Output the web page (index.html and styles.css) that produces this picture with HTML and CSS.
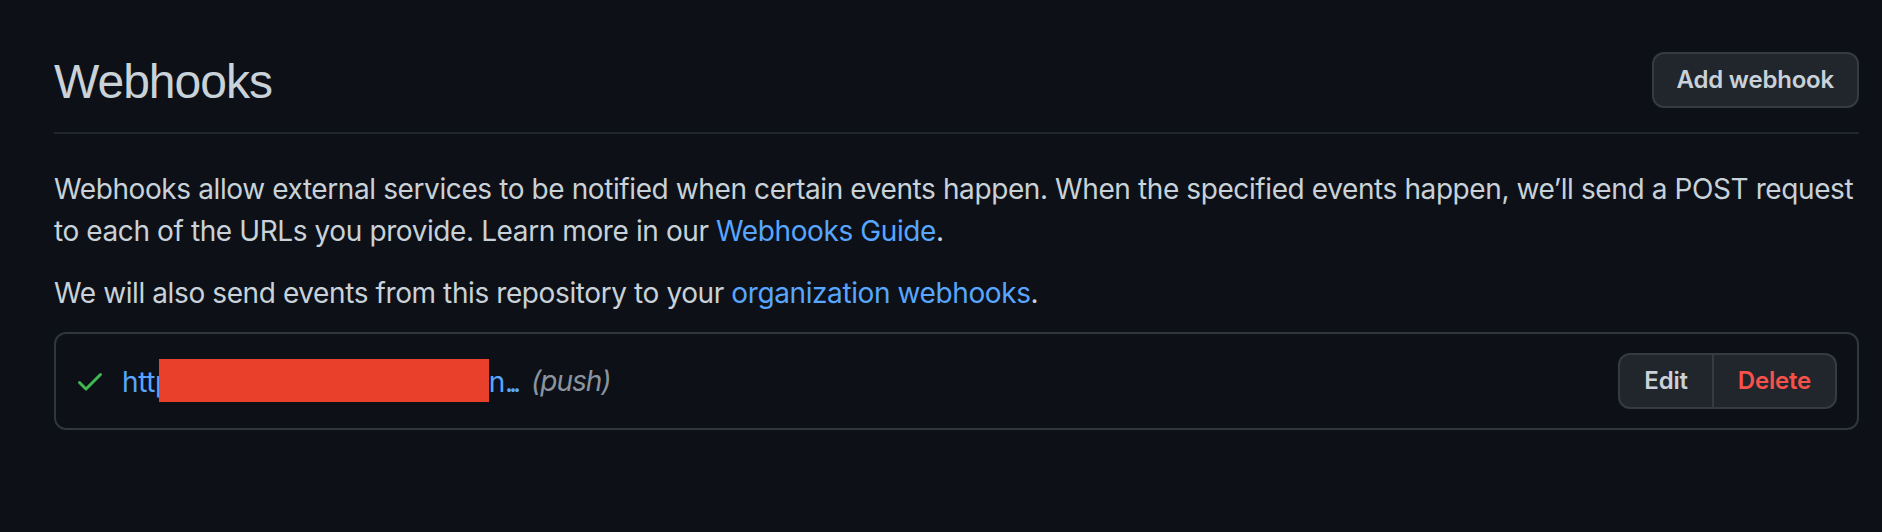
FILE: index.html
```html
<!DOCTYPE html>
<html lang="en">
<head>
<meta charset="utf-8">
<title>Webhooks</title>
<link rel="stylesheet" href="styles.css">
</head>
<body>
<main class="page">
  <div class="subhead">
    <h2 class="subhead-heading">Webhooks</h2>
    <div class="subhead-actions">
      <a class="btn" href="#">Add webhook</a>
    </div>
  </div>

  <p class="desc">Webhooks allow external services to be notified when certain events happen. When the specified events happen, we’ll send a POST request to each of the URLs you provide. Learn more in our <a class="link" href="#">Webhooks Guide</a>.</p>
  <p class="desc last">We will also send events from this repository to your <a class="link" href="#">organization webhooks</a>.</p>

  <div class="box">
    <div class="hook-row">
      <svg class="check" viewBox="0 0 16 16" width="32" height="32" aria-hidden="true"><path fill="currentColor" d="M13.78 4.22a.75.75 0 0 1 0 1.06l-7.25 7.25a.75.75 0 0 1-1.06 0L2.22 9.28a.751.751 0 0 1 .018-1.042.751.751 0 0 1 1.042-.018L6 10.94l6.72-6.72a.75.75 0 0 1 1.06 0Z"></path></svg>
      <a class="hook-url" href="#"><span>http</span><span class="redact" aria-label="redacted"></span><span>n</span><span class="ellipsis">...</span></a>
      <span class="hook-events">(push)</span>
      <div class="btn-group">
        <a class="btn group-btn" href="#">Edit</a>
        <a class="btn group-btn danger" href="#">Delete</a>
      </div>
    </div>
  </div>
</main>
</body>
</html>
```

FILE: styles.css
```css
* { box-sizing: border-box; }
html, body { margin: 0; padding: 0; }
body {
  background: #0d1117;
  color: #c9d1d9;
  font-family: Inter, "Liberation Sans", Arial, sans-serif;
  font-size: 28px;
  line-height: 42px;
  letter-spacing: -0.4px;
  width: 1882px;
  height: 532px;
  overflow: hidden;
}
a { text-decoration: none; }
.page {
  padding: 46px 23px 0 54px;
}
.subhead {
  display: flex;
  align-items: center;
  padding-bottom: 14px;
  border-bottom: 2px solid #21262d;
  margin-bottom: 34px;
}
.subhead-heading {
  flex: 1 1 auto;
  margin: 0;
  font-family: "Liberation Sans", Arial, sans-serif;
  font-weight: 400;
  font-size: 48px;
  line-height: 72px;
  letter-spacing: -1px;
  color: #c9d1d9;
}
.subhead-actions { display: flex; margin-top: -5px; }
.btn {
  display: inline-flex;
  align-items: center;
  height: 56px;
  padding: 0 23px;
  font-size: 24px;
  font-weight: 600;
  line-height: 1;
  letter-spacing: -0.2px;
  color: #c9d1d9;
  background: #21262d;
  border: 2px solid #363b42;
  border-radius: 12px;
}
.desc { margin: 0 0 20px; }
.desc.last { margin-bottom: 18px; }
.link { color: #58a6ff; }
.box {
  border: 2px solid #30363d;
  border-radius: 12px;
  padding: 19px 20px 19px 18px;
}
.hook-row {
  display: flex;
  align-items: center;
}
.check { color: #3fb950; flex: none; margin-right: 16px; }
.hook-url { color: #58a6ff; white-space: nowrap; }
.redact {
  display: inline-block;
  width: 330px;
  height: 43px;
  margin-left: -13px;
  vertical-align: -10px;
  background: #e8402a;
}
.ellipsis { letter-spacing: -4px; }
.hook-events {
  margin-left: 14px;
  color: #8b949e;
  font-style: italic;
  letter-spacing: -1px;
}
.btn-group {
  margin-left: auto;
  display: flex;
}
.group-btn { border-radius: 0; padding: 0 24px; }
.group-btn:first-child { border-radius: 12px 0 0 12px; }
.group-btn:last-child { border-radius: 0 12px 12px 0; border-left: 0; }
.danger { color: #f85149; }
```
